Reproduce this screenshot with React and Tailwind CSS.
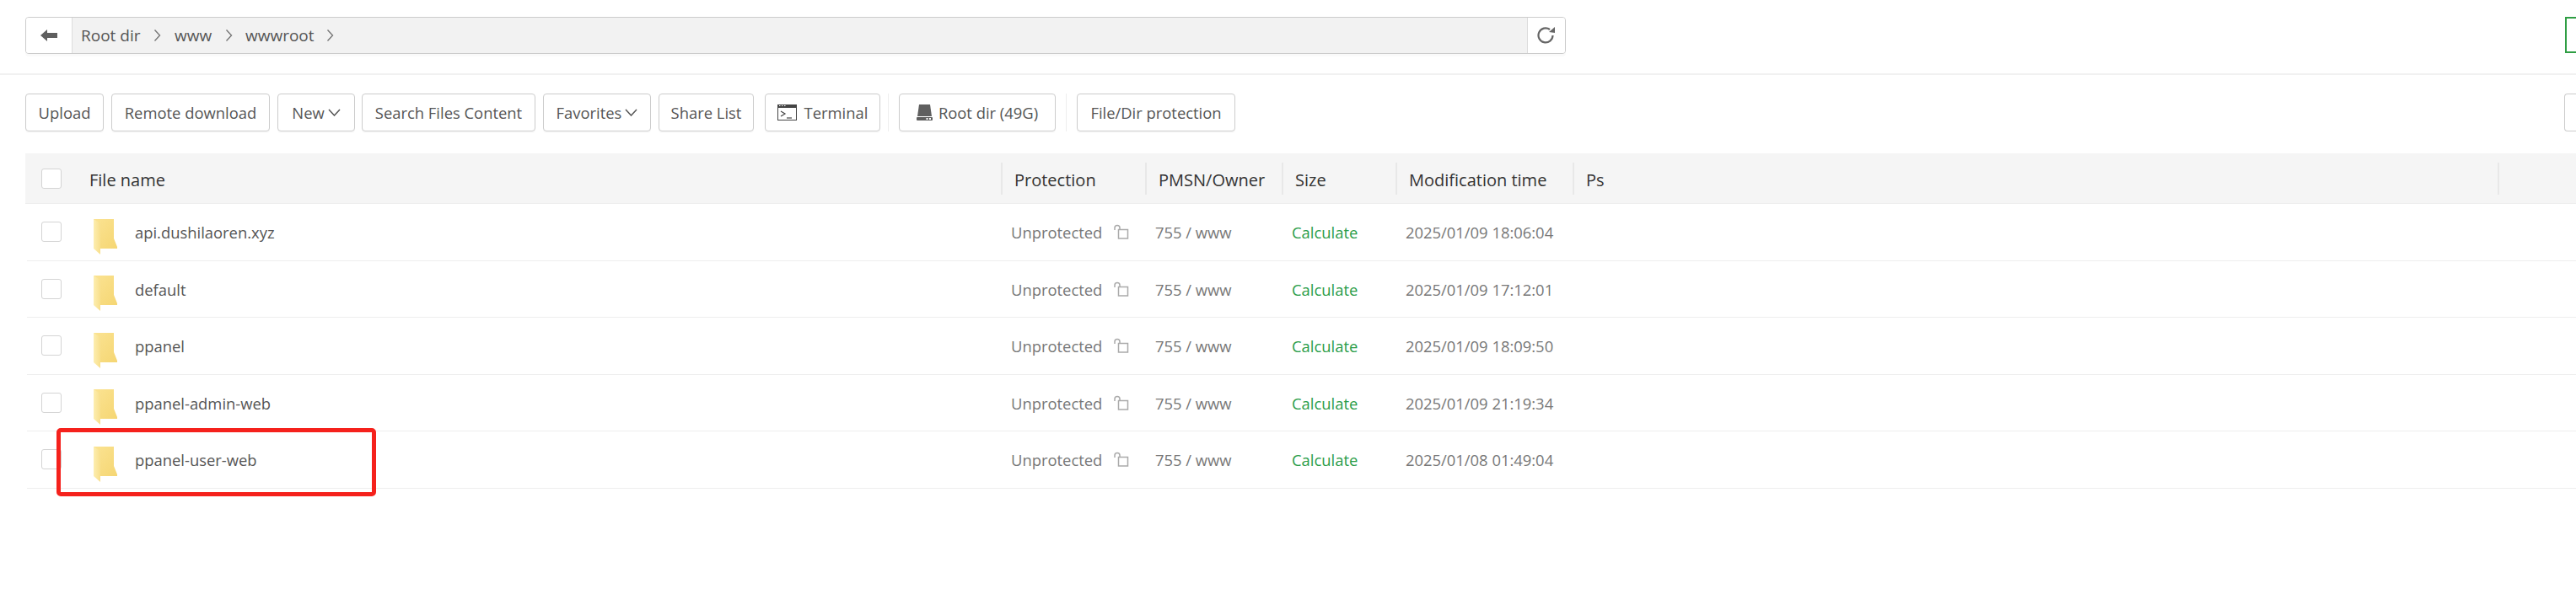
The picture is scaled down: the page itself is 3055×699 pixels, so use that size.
const rows = [
  { name: "api.dushilaoren.xyz", time: "2025/01/09 18:06:04" },
  { name: "default", time: "2025/01/09 17:12:01" },
  { name: "ppanel", time: "2025/01/09 18:09:50" },
  { name: "ppanel-admin-web", time: "2025/01/09 21:19:34" },
  { name: "ppanel-user-web", time: "2025/01/08 01:49:04" },
];

function Folder() {
  return (
    <svg width="29" height="42" viewBox="0 0 29 42" className="shrink-0">
      <defs>
        <linearGradient id="folderBack" x1="0" y1="0" x2="1" y2="1">
          <stop offset="0" stopColor="#fbe392" />
          <stop offset="1" stopColor="#f5d673" />
        </linearGradient>
        <linearGradient id="folderFlap" x1="0" y1="0" x2="1" y2="0">
          <stop offset="0" stopColor="#fdeeb0" />
          <stop offset="1" stopColor="#f8df8c" />
        </linearGradient>
      </defs>
      <polygon points="0,0 24,0 24,23 28,33 28,35 8,35" fill="url(#folderBack)" />
      <polygon points="0,0 8,5 8,42 0,35" fill="url(#folderFlap)" />
    </svg>
  );
}

function Chevron() {
  return (
    <svg width="9" height="16" viewBox="0 0 9 16" fill="none" stroke="#777" strokeWidth="1.4" className="shrink-0">
      <path d="M1.5 1.5 7.5 8 1.5 14.5" />
    </svg>
  );
}

function Caret() {
  return (
    <svg width="15" height="9" viewBox="0 0 15 9" fill="none" stroke="#555" strokeWidth="1.5" className="shrink-0">
      <path d="M1 1 7.5 8 14 1" />
    </svg>
  );
}

function LockOpen() {
  return (
    <svg width="19" height="18" viewBox="0 0 19 18" fill="none" stroke="#aaa" strokeWidth="1.5" className="shrink-0">
      <rect x="6.500" y="6.500" width="11" height="10.500" />
      <path d="M2 7V4.500a3 3 0 0 1 6 0V6" />
    </svg>
  );
}

function TerminalIcon() {
  return (
    <svg width="23" height="19" viewBox="0 0 23 19" className="shrink-0">
      <rect x="0.500" y="0.500" width="22" height="18" fill="#fff" stroke="#444" />
      <rect x="0" y="0" width="23" height="4" fill="#444" />
      <path d="M2 1.500h1.500M5 1.500h1.500M8 1.500h1.500" stroke="#fff" strokeWidth="1.200" />
      <path d="M4 8 9 11 4 14" fill="none" stroke="#444" strokeWidth="1.200" />
      <path d="M11 16h6" stroke="#444" strokeWidth="1.200" />
    </svg>
  );
}

function DriveIcon() {
  return (
    <svg width="19" height="19" viewBox="0 0 19 19" className="shrink-0">
      <path d="M3 0h13l2 14H1Z" fill="#5f5f5f" />
      <rect x="0" y="15" width="19" height="4" rx="1" fill="#5f5f5f" />
      <rect x="11.500" y="16" width="2" height="2" fill="#fff" />
      <rect x="15" y="16" width="2" height="2" fill="#fff" />
    </svg>
  );
}

function Btn({ className = "", children }) {
  return (
    <div className={`h-[45px] shrink-0 flex items-center justify-center rounded border border-[#ccc] bg-white text-[#555] shadow-[0_2px_0_#fafafa] ${className}`}>
      {children}
    </div>
  );
}

function Check() {
  return <div className="w-6 h-6 shrink-0 rounded-[3px] border border-[#d4d4d4] bg-white" />;
}

export default function App() {
  return (
    <div className="relative h-[699px] w-[3055px] overflow-hidden bg-white text-[18.4px] font-['Open_Sans',sans-serif] text-[#555]">
      {/* path bar */}
      <div className="flex justify-between pl-[30px] pt-5 h-[89px] border-b-2 border-[#f1f1f1]">
        <div className="flex w-[1827px] h-[44px] rounded border border-[#ccc] bg-[#f2f2f2] overflow-hidden shadow-[0_3px_0_#fafafa]">
          <div className="w-[55px] shrink-0 bg-white border-r border-[#ddd] flex items-center justify-center">
            <svg width="20" height="14" viewBox="0 0 20 14">
              <path d="M0 7 8 0v4h12v6H8v4Z" fill="#5f5f5f" />
            </svg>
          </div>
          <div className="flex-1 flex items-center pl-[10px] text-[19px]">
            <span className="w-[86px]">Root dir</span>
            <Chevron />
            <span className="ml-4 w-[60px]">www</span>
            <Chevron />
            <span className="ml-[15px] w-[96px]">wwwroot</span>
            <Chevron />
          </div>
          <div className="w-[45px] shrink-0 bg-white border-l border-[#ddd] flex items-center justify-center">
            <svg width="22" height="22" viewBox="0 0 22 22" fill="none" stroke="#666" strokeWidth="2.200">
              <path d="M15 4A8.500 8.500 0 1 0 18.500 11" />
              <path d="M21 1v7l-7-1Z" fill="#666" stroke="none" />
            </svg>
          </div>
        </div>
        <div className="w-[13px] h-[43px] border-2 border-r-0 border-[#2f9e44]" />
      </div>

      {/* toolbar */}
      <div className="flex items-center h-[45px] mt-[22px] pl-[30px]">
        <Btn className="w-[93px]">Upload</Btn>
        <Btn className="ml-[9px] w-[188px]">Remote download</Btn>
        <Btn className="ml-[9px] w-[92px] gap-1">New <Caret /></Btn>
        <Btn className="ml-2 w-[206px]">Search Files Content</Btn>
        <Btn className="ml-[9px] w-[128px] gap-1">Favorites <Caret /></Btn>
        <Btn className="ml-[9px] w-[113px]">Share List</Btn>
        <Btn className="ml-[13px] w-[137px] gap-[9px]"><TerminalIcon /> Terminal</Btn>
        <div className="ml-[9px] w-px h-[45px] bg-[#eee]" />
        <Btn className="ml-3 w-[186px] gap-[7px]"><DriveIcon /> Root dir (49G)</Btn>
        <div className="ml-3 w-px h-[45px] bg-[#eee]" />
        <Btn className="ml-3 w-[188px]">File/Dir protection</Btn>
        <div className="ml-auto w-[14px] h-[45px] shrink-0 rounded-l border border-r-0 border-[#ccc]" />
      </div>

      {/* table head */}
      <div className="flex items-center h-[60px] mt-[26px] ml-[30px] bg-[#f5f5f5] border-b border-[#eee] text-[#333] text-[20px]">
        <div className="w-[1157px] flex items-center pl-[19px]">
          <Check />
          <span className="ml-[33px] pt-[5px]">File name</span>
        </div>
        <div className="w-[171px] h-[38px] flex items-center pl-[14px] pt-[5px] border-l-2 border-[#e8e8e8]">Protection</div>
        <div className="w-[162px] h-[38px] flex items-center pl-[14px] pt-[5px] border-l-2 border-[#e8e8e8]">PMSN/Owner</div>
        <div className="w-[135px] h-[38px] flex items-center pl-[14px] pt-[5px] border-l-2 border-[#e8e8e8]">Size</div>
        <div className="w-[210px] h-[38px] flex items-center pl-[14px] pt-[5px] border-l-2 border-[#e8e8e8]">Modification time</div>
        <div className="w-[1097px] h-[38px] flex items-center pl-[14px] pt-[5px] border-l-2 border-[#e8e8e8]">Ps</div>
        <div className="h-[38px] border-l-2 border-[#e8e8e8]" />
      </div>

      {/* table rows */}
      <div className="ml-[32px]">
        {rows.map((row) => (
          <div key={row.name} className="flex items-center h-[67.5px] border-b border-[#eee]">
            <div className="w-[1155px] flex items-center pl-[17px]">
              <Check />
              <div className="ml-[38px] mt-[11px]"><Folder /></div>
              <span className="ml-5 pt-[2px]">{row.name}</span>
            </div>
            <div className="w-[171px] flex items-center pl-3 pt-[2px] text-[#777]">
              Unprotected
              <span className="ml-[13px] -mt-[2px]"><LockOpen /></span>
            </div>
            <div className="w-[162px] pl-3 pt-[2px] text-[#777]">755 / www</div>
            <div className="w-[135px] pl-3 pt-[2px] text-[#2a9d4a]">Calculate</div>
            <div className="w-[210px] pl-3 pt-[2px] text-[#777]">{row.time}</div>
          </div>
        ))}
      </div>

      {/* red annotation round the last row */}
      <div className="absolute left-[67px] top-[508px] w-[379px] h-[81px] rounded-[5px] border-[5px] border-[#f5211c]" />
    </div>
  );
}
